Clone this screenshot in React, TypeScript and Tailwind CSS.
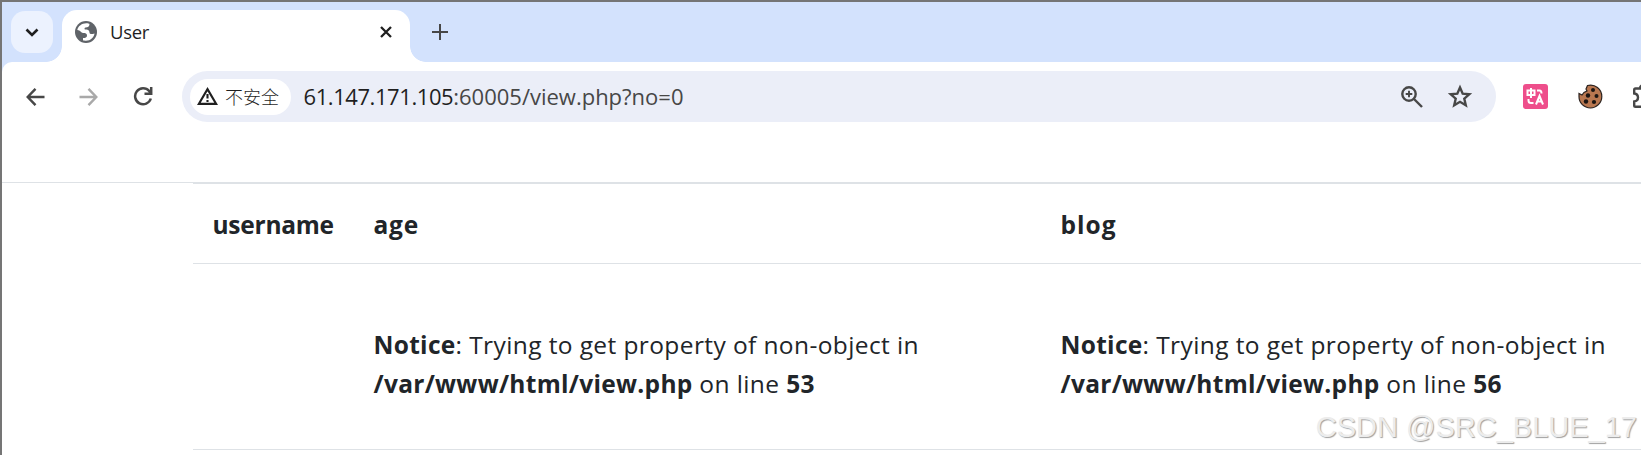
import type { ReactNode } from 'react';

type IconProps = {
    w: number;
    h: number;
    stroke?: number;
    className?: string;
    children: ReactNode;
};

function Icon({ w, h, stroke = 2.5, className = 'text-[#474747]', children }: IconProps) {
    return (
        <svg
            width={w}
            height={h}
            viewBox={`0 0 ${w} ${h}`}
            fill="none"
            stroke="currentColor"
            strokeWidth={stroke}
            className={`shrink-0 ${className}`}
        >
            {children}
        </svg>
    );
}

function GlobeIcon() {
    return (
        <svg width="22" height="22" viewBox="0 0 22 22" className="shrink-0">
            <circle cx="11" cy="11" r="11" fill="#5f6368" />
            <path
                d="M2.300 9C3.200 5 7 2.200 11.500 2.300C13 2.300 14 2.700 14.500 3C14.500 5.500 13 6.500 10.500 6.500C9.500 6.500 9.300 7.500 9.800 8.500C12.500 8.500 14.500 9 14.500 11.500C14.500 13 16 13.500 19.500 12.500C19 16.500 15.500 19.700 11 19.700C9.500 19.700 8.700 19.500 8 19.200V17C10.500 17 12 16.500 12 14.500C12 12.500 10.500 12 8 12C6 12 5.500 9 2.300 9Z"
                fill="#fff"
            />
        </svg>
    );
}

function TranslateIcon() {
    return (
        <svg width="25" height="25" viewBox="0 0 25 25" className="shrink-0">
            <rect width="25" height="25" rx="3" fill="#ee4e8b" />
            <g fill="none" stroke="#fff" strokeWidth="2">
                <path d="M4.500 6.500H11.500V11H4.500ZM8 4V14" />
                <path d="M14 6.500H16.500Q18.500 6.500 18.500 9.500" />
                <path d="M5.500 15V16.500Q5.500 19 8 19H10.500" />
                <path d="M13 20.500L16.500 12L20 20.500M14.200 17.500H18.800" />
            </g>
        </svg>
    );
}

function CookieIcon() {
    return (
        <svg width="25" height="25" viewBox="0 0 25 25" className="shrink-0">
            <path
                d="M9.500 1.500C17 -0.500 23.800 5 23.800 12.500C23.800 19 18.500 24 12.500 24C6 24 1 19 1 12.500V9.500L4 11L6 8.500L9 7L8 5Z"
                fill="#b97750"
                stroke="#2b2320"
                strokeWidth="1.200"
            />
            <g fill="#1c1512">
                <circle cx="15" cy="6" r="2" />
                <circle cx="10" cy="11.500" r="2.200" />
                <circle cx="18.500" cy="12" r="2" />
                <circle cx="8" cy="17.500" r="2.200" />
                <circle cx="16" cy="18" r="2.100" />
            </g>
        </svg>
    );
}

function TabStrip() {
    return (
        <div className="flex h-[60px] bg-[#d3e2fd]">
            <div className="flex w-[60px] items-start pl-[9px] pt-[9px]">
                <button className="flex h-[42px] w-[42px] items-center justify-center rounded-[14px] bg-[#ecf2fe]" aria-label="Search tabs">
                    <Icon w={14} h={9} stroke={2.6} className="text-[#1f1f1f]">
                        <path d="M1.500 1.500L7 7L12.500 1.500" />
                    </Icon>
                </button>
            </div>
            <div className="relative mt-2 flex h-[52px] w-[348px] items-center rounded-t-[15px] bg-white pb-[9px] pl-[13px] pr-[18px]">
                <GlobeIcon />
                <span className="ml-[13px] flex-1 text-[18.500px] leading-6 tracking-[-0.3px] text-[#1f1f1f]">User</span>
                <Icon w={12} h={12} stroke={2.3} className="text-[#1f1f1f]">
                    <path d="M1 1L11 11M11 1L1 11" />
                </Icon>
                {/* flared bottom corners */}
                <span className="absolute -left-4 bottom-0 h-4 w-4 bg-[radial-gradient(circle_at_0_0,transparent_15.500px,#fff_16.200px)]" />
                <span className="absolute -right-4 bottom-0 h-4 w-4 bg-[radial-gradient(circle_at_100%_0,transparent_15.500px,#fff_16.200px)]" />
            </div>
            <button className="ml-[22px] mt-[22px] h-4 w-4" aria-label="New tab">
                <Icon w={16} h={16} stroke={2}>
                    <path d="M8 0V16M0 8H16" />
                </Icon>
            </button>
        </div>
    );
}

function Toolbar() {
    return (
        <div className="bg-[#d3e2fd]">
            <div className="flex h-[69px] items-center rounded-tl-[10px] bg-white">
                <div className="flex w-[180px] shrink-0 items-center gap-[35px] pl-[23.500px]">
                    <Icon w={19} h={18} stroke={2.4}>
                        <path d="M18.500 9H2M9.500 0.800L1.700 9L9.500 17.200" />
                    </Icon>
                    <Icon w={19} h={18} stroke={2.4} className="-ml-[0.500px] text-[#a9a9a9]">
                        <path d="M0.500 9H17M9.500 0.800L17.300 9L9.500 17.200" />
                    </Icon>
                    <Icon w={20} h={20} stroke={2.5} className="-ml-[0.500px] -mt-px text-[#474747]">
                        <path d="M17.800 12.500A8 8 0 1 1 16.200 5L17.500 6.800M18.200 1V7.700H11.500" />
                    </Icon>
                </div>
                <div className="flex h-[51px] w-[1314px] shrink-0 items-center rounded-full bg-[#ebeef8] pl-2 pr-[23px]">
                    <div className="flex h-9 w-[101px] items-center rounded-full bg-white pl-[7px]">
                        <Icon w={21} h={18} stroke={2.1} className="-mt-px text-[#1f1f1f]">
                            <path d="M10.500 2.100L19.200 16.900H1.800Z" />
                            <path d="M10.500 7V11.500M10.500 13V15" />
                        </Icon>
                        <span className="-mt-px ml-[7px] whitespace-nowrap font-['Noto_Sans_CJK_SC',sans-serif] text-[18px] font-light leading-6 text-[#1f1f1f]">不安全</span>
                    </div>
                    <span className="-mt-[2px] ml-[12.500px] flex-1 whitespace-nowrap text-[22px] leading-8 text-[#474747]">
                        <span className="tracking-[-0.43px] text-[#1f1f1f]">61.147.171.105</span>:60005/view.php?no=0
                    </span>
                    <Icon w={22} h={22} stroke={2.4}>
                        <circle cx="8" cy="8" r="6.700" />
                        <path d="M13 13L21 21" />
                        <path d="M8 4.700V11.300M4.700 8H11.300" strokeWidth="1.900" />
                    </Icon>
                    <Icon w={26} h={25} stroke={2.4} className="ml-6 text-[#474747]">
                        <path d="M13 3.500L15.700 9.700L22.300 10.300L17.300 14.700L18.800 21.200L13 17.800L7.200 21.200L8.700 14.700L3.700 10.300L10.300 9.700Z" />
                    </Icon>
                </div>
                <div className="ml-[27px] flex shrink-0 items-center gap-[30px]">
                    <TranslateIcon />
                    <CookieIcon />
                    <Icon w={26} h={26} stroke={2.4} className="-ml-px text-[#474747]">
                        <path d="M8 4.500H3.500Q2.200 4.500 2.200 6V9.500Q6 10 6 13.500Q6 17 2.200 17.500V21.500Q2.200 22.800 3.500 22.800H19Q20 22.800 20 21.500V6Q20 4.500 19 4.500H14Q14 1.500 11 1.500Q8 1.500 8 4.500Z" />
                    </Icon>
                </div>
            </div>
        </div>
    );
}

function Notice({ line }: { line: number }) {
    return (
        <td className="pb-[46px] pl-[19.500px] pr-0 pt-[61px] align-top tracking-[0.4px] [&_b]:tracking-[0.3px]">
            <b>Notice</b>: Trying to get property of non-object in
            <br />
            <b>/var/www/html/view.php</b> on line <b>{line}</b>
        </td>
    );
}

export default function App() {
    return (
        <div className="relative h-[455px] w-[1641px] overflow-hidden border-l-2 border-t-2 border-[#757575] bg-white font-['Open_Sans','Noto_Sans',sans-serif]">
            <TabStrip />
            <Toolbar />
            <div className="mt-[51px] border-t border-[#dee2e6]" />
            <table className="-mt-px ml-[191px] w-[1480px] table-fixed border-separate border-spacing-0 text-left text-[24.500px] leading-[39px] text-[#212529]">
                <thead>
                    <tr className="*:h-[82px] *:border-b *:border-t-2 *:border-[#dee2e6] *:pl-[19.500px] *:pt-[2px] *:font-bold">
                        <th className="w-[161px] tracking-[-0.25px]">username</th>
                        <th className="w-[687px] tracking-[0.8px]">age</th>
                        <th className="tracking-[1px]">blog</th>
                    </tr>
                </thead>
                <tbody>
                    <tr className="*:border-b *:border-[#dee2e6]">
                        <td />
                        <Notice line={53} />
                        <Notice line={56} />
                    </tr>
                </tbody>
            </table>
            <div className="absolute right-[4px] top-[408px] whitespace-nowrap font-['Liberation_Sans',sans-serif] text-[29px] leading-[34px] text-[#ececec] [text-shadow:1px_1px_1px_#a0a0a0]">
                CSDN @SRC_BLUE_17
            </div>
        </div>
    );
}
